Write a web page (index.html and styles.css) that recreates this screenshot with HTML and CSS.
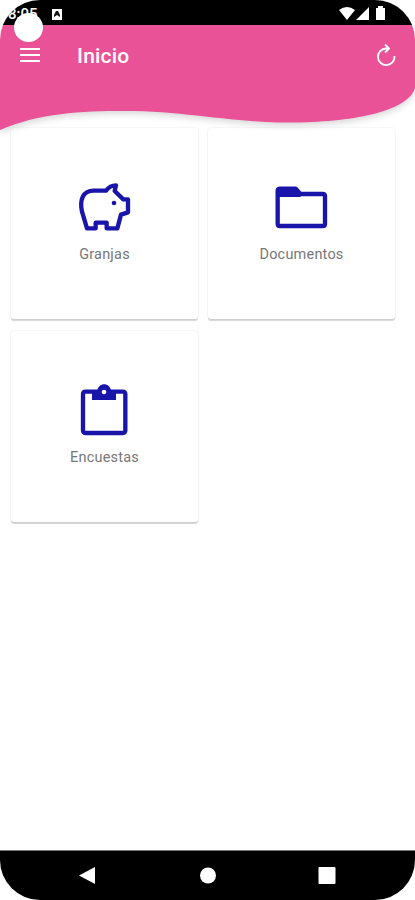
FILE: index.html
```
<!DOCTYPE html>
<html lang="es">
<head>
<meta charset="utf-8">
<title>Inicio</title>
<link rel="stylesheet" href="styles.css">
</head>
<body>
<div class="phone">
  <header class="top">
    <svg class="wave" viewBox="0 0 415 145" aria-hidden="true"><path d="M0 20H415V88C408 112 350 122.500 290 122.500C230 122.500 185 111 125 111C80 111 40 113 0 130Z"/></svg>
    <div class="status">
      <span class="clock">8:05</span>
      <svg class="notice" viewBox="0 0 12 12"><path fill="#fff" d="M1 1h10v11H1z"/><path d="M3 9V7l2-4h2l2 4v2L6 7z" fill="#111"/></svg>
      <svg class="signals" viewBox="0 0 50 16"><path d="M1 4Q9-2 17 4L9 14ZM31 1V14H18ZM38 2h2V0h5v2h2v12h-9z"/></svg>
    </div>
    <span class="camera"></span>
    <div class="bar">
      <svg class="menu" viewBox="0 0 20 16"><path d="M0 2h20M0 8h20M0 14h20"/></svg>
      <h1>Inicio</h1>
      <svg class="reload" viewBox="0 0 22 24"><path d="M19.500 13A8.300 8.300 0 1 1 11 5.500H13.500M10 1.500L14 5.500L10 9.500"/></svg>
    </div>
  </header>
  <main class="grid">
    <section class="card">
      <svg class="icon" viewBox="42 24 180 180"><path d="M81 175L66 125Q60 98 68 81Q77 62 101 62H138Q150 46 168 46L164 63L190 88H204V127L183 134L172 175H140V158H107V175Z"/><circle cx="162" cy="99" r="7"/></svg>
      <span>Granjas</span>
    </section>
    <section class="card">
      <svg class="icon" viewBox="64 22 180 180"><path d="M91 54H138L152 70H219Q226 70 226 77V159Q226 166 219 166H91Q84 166 84 159V61Q84 54 91 54Z"/><path class="fill" d="M87 54H138L153 70V79H87Z"/></svg>
      <span>Documentos</span>
    </section>
    <section class="card">
      <svg class="icon" viewBox="42 32 180 180"><path d="M76 64H188Q196 64 196 72V180Q196 188 188 188H76Q69 188 69 180V72Q69 64 76 64Z"/><path class="fill" d="M96 60H112C117 36 148 36 153 60H168V89H96Z"/><circle class="hole" cx="132" cy="65" r="7"/></svg>
      <span>Encuestas</span>
    </section>
  </main>
  <nav class="nav">
    <svg viewBox="0 0 18 18"><path d="M0 8.500L16 0V17Z"/></svg>
    <svg viewBox="0 0 18 18"><circle cx="9" cy="8.500" r="8"/></svg>
    <svg viewBox="0 0 18 18"><rect x=".5" width="17" height="17" rx="1"/></svg>
  </nav>
</div>
</body>
</html>
```
FILE: styles.css
```
* { box-sizing: border-box; }
body { margin: 0; background: #fff; font-family: Roboto, sans-serif; }
.phone { width: 415px; height: 900px; display: flex; flex-direction: column; overflow: hidden; border-radius: 40px; background: #fff; }
.top { position: relative; z-index: 1; height: 128px; flex: none; }
.wave { position: absolute; left: 0; top: 0; width: 415px; height: 145px; z-index: -1; fill: #ea5297; filter: drop-shadow(0 3px 3px rgba(0, 0, 0, .15)); }
.status { height: 25px; background: #000; display: flex; align-items: center; padding: 2px 28px 0 8px; color: #fff; }
.clock { width: 43px; font-size: 15px; font-weight: 500; }
.notice { width: 12px; height: 12px; }
.signals { width: 50px; height: 16px; margin: 0 -1px 0 auto; fill: #fff; }
.camera { position: absolute; left: 14px; top: 13px; width: 29px; height: 29px; border-radius: 50%; background: #fff; }
.bar { height: 60px; display: flex; align-items: center; padding: 0 18px 0 20px; color: #fff; }
.menu { width: 20px; height: 16px; stroke: #fff; stroke-width: 2.2; }
h1 { margin: 1px 0 0 37px; font-size: 21px; font-weight: 500; letter-spacing: .2px; }
.reload { width: 22px; height: 24px; margin-left: auto; fill: none; stroke: #fff; stroke-width: 1.8; }
.grid { flex: 1; display: grid; grid-template-columns: 187px 187px; grid-auto-rows: 191px; gap: 12px 10px; padding: 0 11px; align-content: start; }
.card { display: flex; flex-direction: column; align-items: center; padding-top: 50px; background: #fff; border-radius: 3px; box-shadow: 0 2px 1px rgba(0, 0, 0, .16), 0 0 2px rgba(0, 0, 0, .12); color: #777; font-size: 14.5px; letter-spacing: .2px; line-height: 18px; }
.icon { width: 60px; height: 60px; margin: 0 2px 8px 0; fill: none; stroke: #1915aa; stroke-width: 13; stroke-linejoin: round; }
.icon circle, .icon .fill { fill: #1915aa; stroke: none; }
.icon .hole { fill: #fff; }
.nav { height: 50px; flex: none; background: #000; border-top: 1px solid #777; display: flex; justify-content: space-between; align-items: center; padding: 0 79px; }
.nav svg { width: 18px; height: 18px; fill: #fff; }
```
